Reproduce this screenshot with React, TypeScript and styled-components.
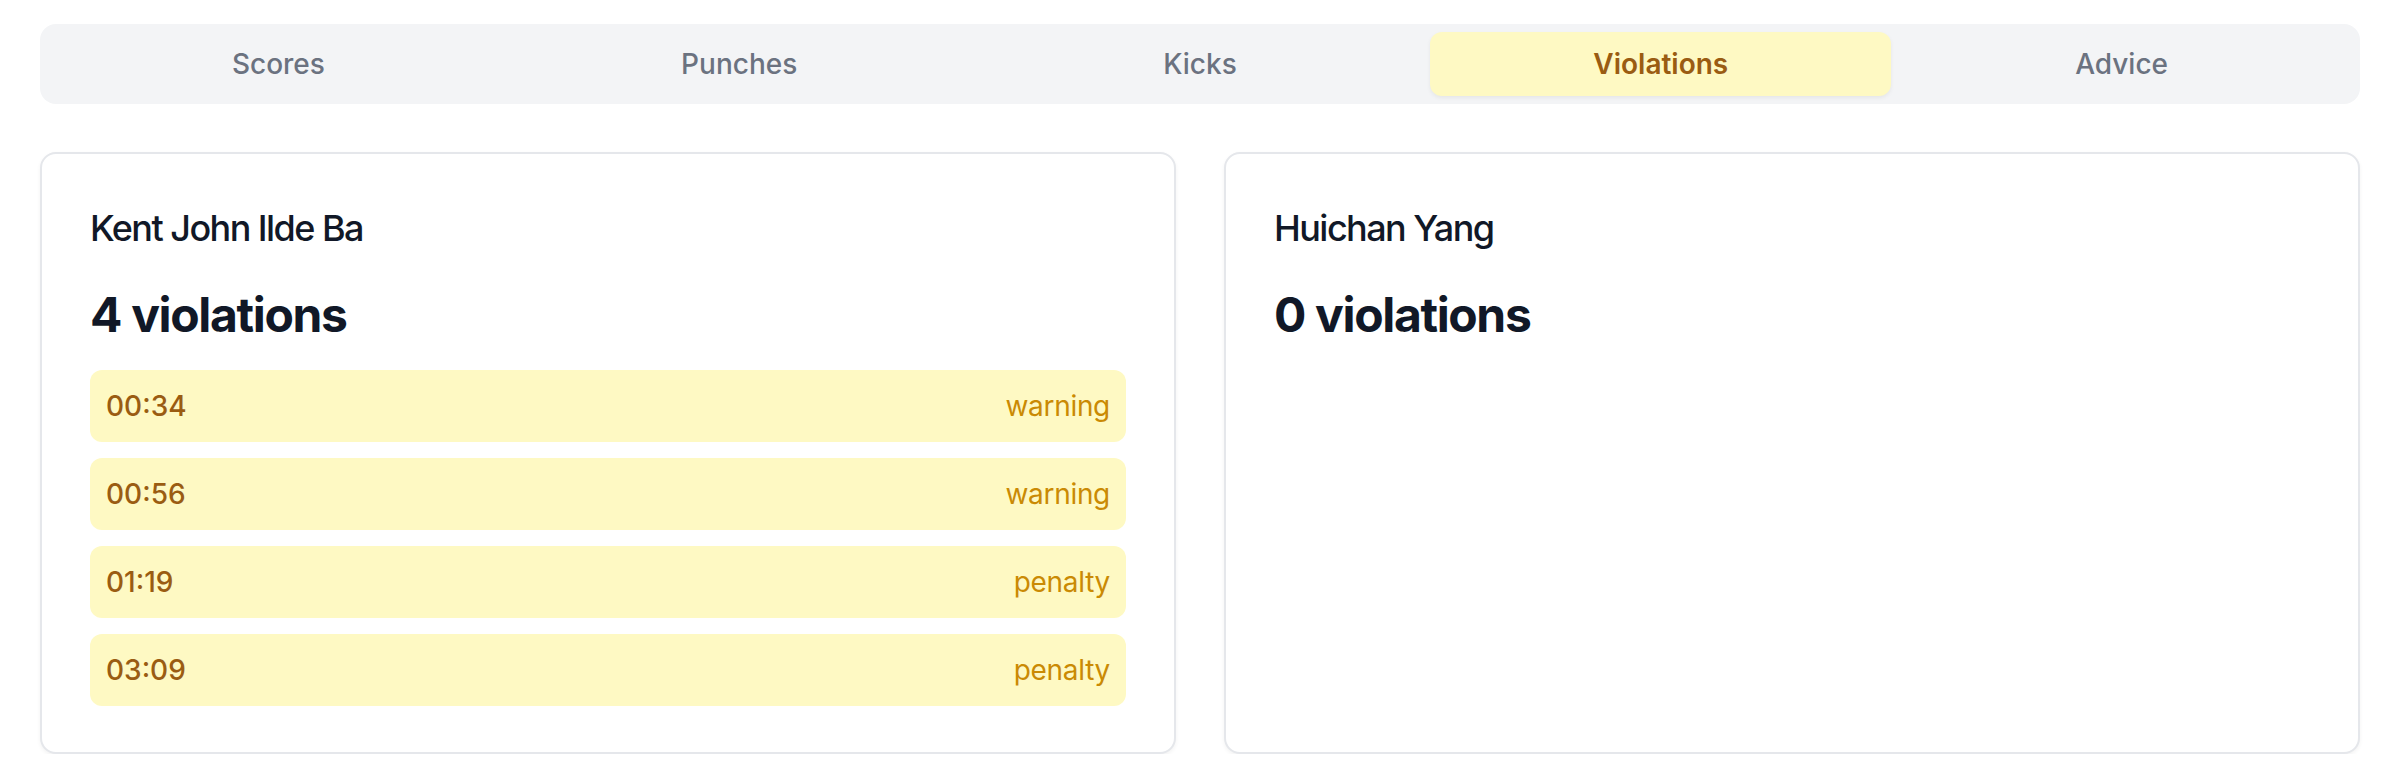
import React from "react";
import styled, { createGlobalStyle } from "styled-components";

const Global = createGlobalStyle`
  html, body { margin: 0; padding: 0; background: #ffffff; }
  body { font-family: Inter, "Noto Sans", "Liberation Sans", sans-serif; -webkit-font-smoothing: antialiased; }
  * { box-sizing: border-box; }
`;

const Page = styled.div`
  padding: 24px 24px 0 40px;
  width: 2384px;
`;

const Wrap = styled.div`
  width: 2320px;
  display: flex;
  flex-direction: column;
  gap: 48px;
`;

const TabBar = styled.div`
  display: grid;
  grid-template-columns: repeat(5, 1fr);
  height: 80px;
  padding: 8px;
  background: #f3f4f6;
  border-radius: 16px;
`;

const Tab = styled.div<{ $active?: boolean }>`
  display: flex;
  align-items: center;
  justify-content: center;
  border-radius: 12px;
  font-size: 28px;
  line-height: 40px;
  font-weight: ${(p) => (p.$active ? 600 : 500)};
  color: ${(p) => (p.$active ? "#9a5c12" : "#6b7280")};
  background: ${(p) => (p.$active ? "#fef9c3" : "transparent")};
  box-shadow: ${(p) => (p.$active ? "0 2px 4px rgba(0,0,0,0.06)" : "none")};
`;

const Grid = styled.div`
  display: grid;
  grid-template-columns: 1fr 1fr;
  gap: 48px;
`;

const Card = styled.div`
  border: 2px solid #e5e7eb;
  border-radius: 16px;
  background: #ffffff;
  box-shadow: 0 2px 4px rgba(0, 0, 0, 0.05);
  padding: 48px;
  height: 602px;
  display: flex;
  flex-direction: column;
`;

const Name = styled.div`
  font-size: 36px;
  line-height: 52px;
  font-weight: 500;
  color: #111827;
  letter-spacing: -1.55px;
`;

const Count = styled.div`
  margin-top: 29px;
  font-size: 48px;
  line-height: 64px;
  font-weight: 700;
  color: #111827;
  letter-spacing: -1.35px;
`;

const List = styled.div`
  margin-top: 23px;
  display: flex;
  flex-direction: column;
  gap: 16px;
`;

const Row = styled.div`
  display: flex;
  align-items: center;
  justify-content: space-between;
  height: 72px;
  padding: 0 16px;
  background: #fef9c3;
  border-radius: 12px;
  font-size: 28px;
  line-height: 40px;
`;

const Time = styled.span`
  color: #9a5c12;
  font-weight: 500;
`;

const Kind = styled.span`
  color: #ca8a04;
  font-weight: 400;
  letter-spacing: -0.3px;
`;

type Violation = { time: string; kind: string };

const fighters: { name: string; violations: Violation[] }[] = [
  {
    name: "Kent John Ilde Ba",
    violations: [
      { time: "00:34", kind: "warning" },
      { time: "00:56", kind: "warning" },
      { time: "01:19", kind: "penalty" },
      { time: "03:09", kind: "penalty" },
    ],
  },
  { name: "Huichan Yang", violations: [] },
];

const tabs = ["Scores", "Punches", "Kicks", "Violations", "Advice"];

export default function App() {
  return (
    <>
      <Global />
      <Page>
        <Wrap>
          <TabBar>
            {tabs.map((t) => (
              <Tab key={t} $active={t === "Violations"}>
                {t}
              </Tab>
            ))}
          </TabBar>
          <Grid>
            {fighters.map((f) => (
              <Card key={f.name}>
                <Name>{f.name}</Name>
                <Count>{f.violations.length} violations</Count>
                {f.violations.length > 0 && (
                  <List>
                    {f.violations.map((v) => (
                      <Row key={v.time}>
                        <Time>{v.time}</Time>
                        <Kind>{v.kind}</Kind>
                      </Row>
                    ))}
                  </List>
                )}
              </Card>
            ))}
          </Grid>
        </Wrap>
      </Page>
    </>
  );
}
